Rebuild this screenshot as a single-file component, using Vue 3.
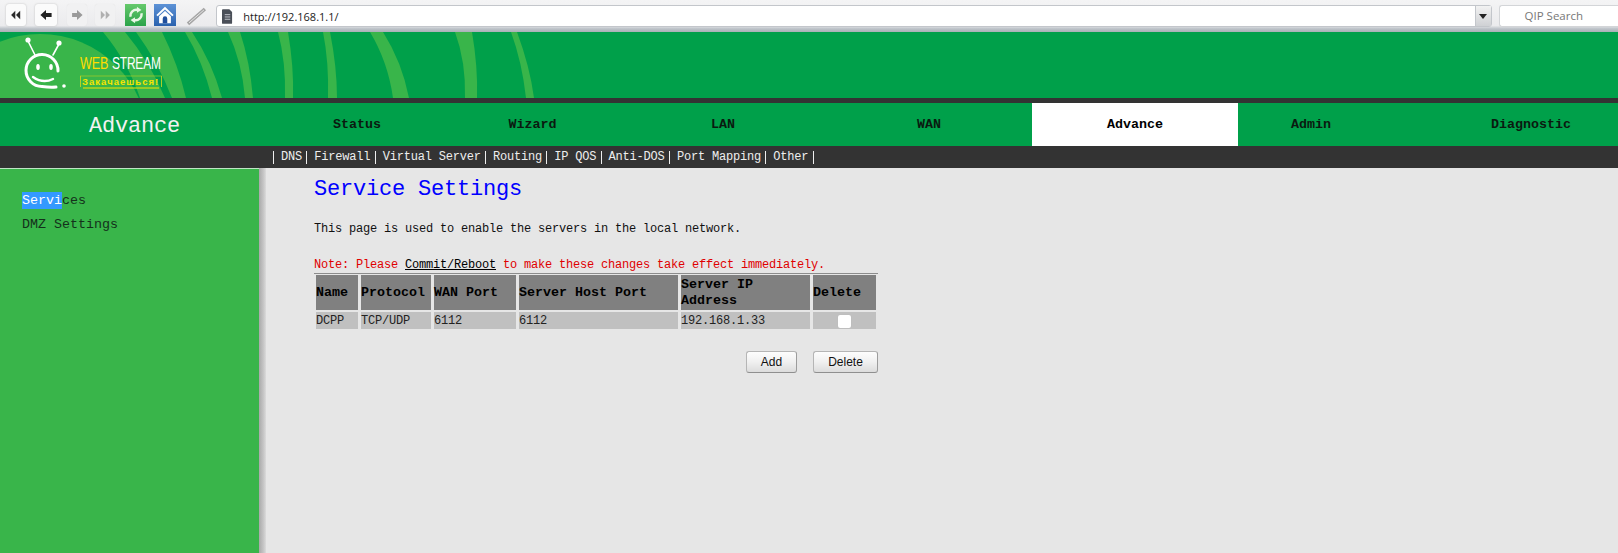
<template>
  <div class="page">
    <!-- browser toolbar -->
    <div class="toolbar">
      <div class="navbtn on">
        <svg viewBox="0 0 20 20"><path d="M9 4 3 10l6 6zM16 4l-6 6 6 6z" fill="#2b2b2b"/></svg>
      </div>
      <div class="navbtn on">
        <svg viewBox="0 0 20 20"><path d="M10 3 2 10l8 7v-4h8V7h-8z" fill="#222"/></svg>
      </div>
      <div class="navbtn off">
        <svg viewBox="0 0 20 20"><path d="M10 3l8 7-8 7v-4H3V7h7z" fill="#9a9a9a"/></svg>
      </div>
      <div class="navbtn off">
        <svg viewBox="0 0 20 20"><path d="M4 4l6 6-6 6zM11 4l6 6-6 6z" fill="#b0b0b0"/></svg>
      </div>
      <div class="tile refresh">
        <svg viewBox="0 0 22 22" fill="none" stroke="#e9f7e6" stroke-width="2.6">
          <path d="M5 13a6.500 6.500 0 0 1 8-7.500"/>
          <path d="M17 9a6.500 6.500 0 0 1-8 7.500"/>
          <path d="M12 2l5 3.500-5 3z" fill="#e9f7e6" stroke="none"/>
          <path d="M10 20l-5-3.500 5-3z" fill="#e9f7e6" stroke="none"/>
        </svg>
      </div>
      <div class="tile home">
        <svg viewBox="0 0 22 22">
          <path d="M11 2 1.500 11l1.500 1.500L11 5l8 7.500 1.500-1.500z" fill="#fff"/>
          <path d="M4.500 12.500 11 6.500l6.500 6V20h-13z" fill="#fff"/>
          <path d="M8.500 20v-5a2.500 2.500 0 0 1 5 0v5z" fill="#1f4f9c"/>
        </svg>
      </div>
      <div class="pencil">
        <svg viewBox="0 0 22 22" fill="none">
          <path d="M2 20 19 5" stroke="#a5a5a5" stroke-width="3.500"/>
          <path d="M3 19 18 6" stroke="#e4e4e4" stroke-width="1"/>
        </svg>
      </div>
      <div class="address">
        <svg class="page-icon" viewBox="0 0 12 16">
          <path d="M1 0h7l3 3v12a1 1 0 0 1-1 1H1a1 1 0 0 1-1-1V1a1 1 0 0 1 1-1z" fill="#4a4f58"/>
          <path d="M3 6h6M3 8.500h6M3 11h6" stroke="#c8ccd2" stroke-width="1"/>
        </svg>
        <span class="url">http://192.168.1.1/</span>
        <div class="drop"><i></i></div>
      </div>
      <div class="search">QIP Search</div>
    </div>

    <!-- banner with the logo -->
    <div class="banner">
      <svg class="art" viewBox="0 0 600 66" width="600" height="66">
        <circle cx="40" cy="110" r="108" fill="#39b54a"/>
        <g fill="#39b54a">
          <path d="M103 0h22Q150 30 165 66h-25Q128 30 103 0z"/>
          <path d="M136 0h26Q178 32 186 66h-14Q158 30 136 0z"/>
          <path d="M185 0h7Q212 30 222 66h-10Q203 30 185 0z"/>
          <path d="M228 0h12Q250 30 253 66h-8Q242 30 228 0z"/>
          <path d="M278 0h10Q294 35 293 66h-8Q286 30 278 0z"/>
          <path d="M323 0h7Q337 35 337 66h-9Q329 30 323 0z"/>
          <path d="M370 0h13Q402 30 409 66h-16Q388 30 370 0z"/>
          <path d="M455 0h17Q478 35 477 66h-12Q466 30 455 0z"/>
          <path d="M511 0h6Q530 35 534 66h-8Q522 30 511 0z"/>
        </g>
        <g fill="none" stroke="#fff" stroke-linecap="round">
          <path d="M58 39A16 16 0 1 0 42 54.500Q50 55.500 56 55" stroke-width="3"/>
          <path d="M33 45Q43 52 53 47" stroke-width="2.400"/>
          <path d="M35 23 28 9M53 23 59 12" stroke-width="1.600"/>
        </g>
        <g fill="#fff">
          <circle cx="28" cy="8" r="2.600"/>
          <circle cx="59" cy="11" r="2.600"/>
          <ellipse cx="38" cy="35" rx="1.800" ry="3"/>
          <ellipse cx="51" cy="35" rx="1.800" ry="3"/>
          <circle cx="64" cy="54" r="1.800"/>
        </g>
        <text class="brand" transform="translate(80 37) scale(0.97 1.3)" fill="#ffdd00">WEB</text>
        <text class="brand" transform="translate(112 37) scale(0.92 1.3)" fill="#fff">STREAM</text>
        <path d="M80.500 44v11M161.500 44v11" stroke="#d8d820" stroke-width="0.800"/>
        <path d="M80 44h82" stroke="#b8d020" stroke-width="0.600"/>
        <path d="M83 56h76" stroke="#f5e400" stroke-width="1.200"/>
        <text class="slogan" x="82" y="53" textLength="76">Закачаешься!</text>
      </svg>
    </div>
    <div class="rule"></div>

    <!-- main menu -->
    <div class="menu">
      <div class="section">Advance</div>
      <div v-for="tab in tabs" :key="tab.label" class="tab" :class="tab.cls">{{ tab.label }}</div>
    </div>

    <div class="submenu">
      <span v-for="item in subItems" :key="item" class="subitem">{{ item }}</span>
      <span class="subend"></span>
    </div>

    <div class="main">
      <aside class="sidebar">
        <div class="side-link"><span class="selected">Servi</span>ces</div>
        <div class="side-link">DMZ Settings</div>
      </aside>
      <div class="stripe"></div>
      <section class="content">
        <h1>Service Settings</h1>
        <p class="intro">This page is used to enable the servers in the local network.</p>
        <p class="note">Note: Please <a>Commit/Reboot</a> to make these changes take effect immediately.</p>
        <div class="line"></div>
        <table>
          <colgroup>
            <col v-for="w in colWidths" :key="w" :style="{ width: w + 'px' }">
          </colgroup>
          <thead>
            <tr>
              <th v-for="h in headers" :key="h">{{ h }}</th>
            </tr>
          </thead>
          <tbody>
            <tr>
              <td>DCPP</td>
              <td>TCP/UDP</td>
              <td>6112</td>
              <td>6112</td>
              <td>192.168.1.33</td>
              <td class="center"><input type="checkbox"></td>
            </tr>
          </tbody>
        </table>
        <div class="actions">
          <button class="add">Add</button>
          <button class="del">Delete</button>
        </div>
      </section>
    </div>
  </div>
</template>

<script setup>
const tabs = [
  { label: 'Status' },
  { label: 'Wizard' },
  { label: 'LAN' },
  { label: 'WAN' },
  { label: 'Advance', cls: 'active' },
  { label: 'Admin' },
  { label: 'Diagnostic', cls: 'last' }
]

const subItems = ['DNS', 'Firewall', 'Virtual Server', 'Routing', 'IP QOS', 'Anti-DOS', 'Port Mapping', 'Other']

// table columns, gaps come from border-spacing
const colWidths = [42, 70, 82, 159, 129, 63]
const headers = ['Name', 'Protocol', 'WAN Port', 'Server Host Port', 'Server IP Address', 'Delete']
</script>

<style>
html, body {
  margin: 0;
  background: #e6e6e6;
}
</style>

<style scoped>
.page {
  width: 1618px;
  height: 553px;
  overflow: hidden;
  font-family: "Liberation Mono", monospace;
  font-size: 12px;
  letter-spacing: -0.2px;
  color: #111;
  display: flex;
  flex-direction: column;
}

/* toolbar */
.toolbar {
  height: 32px;
  box-sizing: border-box;
  padding: 4px 0 0 6px;
  display: flex;
  align-items: flex-start;
  background: linear-gradient(#f4f4f5 0%, #ebebed 80%, #bcc2c8 90%, #a9b0b6 100%);
  letter-spacing: 0;
}

.navbtn {
  width: 20px;
  height: 22px;
  margin-right: 9px;
  border-radius: 3px;
  display: flex;
  align-items: center;
  justify-content: center;
}

.navbtn.on {
  background: #fbfbfb;
  box-shadow: 0 0 2px #bbb;
}

.navbtn.off {
  background: #f1f1f2;
  box-shadow: 0 0 1px #ddd;
}

.navbtn svg { width: 14px; height: 14px; }

.navbtn:nth-child(2) { width: 22px; }
.navbtn:nth-child(3) { margin-right: 8px; margin-left: 1px; }
.navbtn:nth-child(4) { margin-right: 10px; }

.tile {
  width: 22px;
  height: 22px;
  margin-right: 8px;
  display: flex;
  align-items: center;
  justify-content: center;
}

.tile svg { width: 20px; height: 20px; }

.refresh { background: linear-gradient(#66c96b, #2ba34a); }
.home { background: linear-gradient(#5d92d6, #2a62ae); }

.pencil {
  width: 22px;
  height: 22px;
  margin: 0 8px 0 2px;
}

.address {
  width: 1282px;
  height: 22px;
  box-sizing: border-box;
  margin-top: 1px;
  padding-left: 5px;
  display: flex;
  align-items: center;
  background: #fff;
  border: 1px solid #c3c6cb;
  border-radius: 3px;
}

.page-icon { width: 11px; height: 15px; }

.url {
  margin-left: 10px;
  font-family: "Open Sans", sans-serif;
  font-size: 11px;
  color: #222;
  flex: 1;
}

.drop {
  width: 15px;
  height: 100%;
  display: flex;
  align-items: center;
  justify-content: center;
  background: linear-gradient(#f2f2f2, #cfd1d4);
  border-left: 1px solid #c3c6cb;
}

.drop i {
  width: 0;
  height: 0;
  border: 4px solid transparent;
  border-top: 5px solid #222;
  margin-top: 4px;
}

.search {
  width: 120px;
  height: 22px;
  box-sizing: border-box;
  margin: 1px 0 0 7px;
  padding-left: 25px;
  background: #fff;
  border: 1px solid #d3d5d8;
  border-right: 0;
  border-radius: 3px 0 0 3px;
  font-family: "Open Sans", sans-serif;
  font-size: 11.500px;
  line-height: 20px;
  color: #777;
}

/* banner */
.banner {
  height: 66px;
  background: #00a04a;
  overflow: hidden;
}

.art { display: block; }

.brand {
  font-family: "Liberation Sans", sans-serif;
  font-size: 13px;
}

.slogan {
  font-family: "Liberation Sans", sans-serif;
  font-size: 9.500px;
  font-weight: 700;
  fill: #f5e400;
}

.rule {
  height: 5px;
  background: #333;
}

/* menu */
.menu {
  height: 43px;
  display: grid;
  grid-template-columns: 269px 176px 175px 206px 206px 206px 146px 234px;
  align-items: stretch;
  background: #00a04a;
  font-size: 13.333px;
  letter-spacing: 0;
  font-weight: 700;
  color: #0a1a10;
}

.section {
  font-size: 22px;
  font-weight: 400;
  letter-spacing: -0.200px;
  color: #f2f2f2;
  text-align: center;
  line-height: 47px;
}

.tab {
  line-height: 43px;
  text-align: center;
}

.tab.active {
  background: #fff;
  color: #000;
}

.tab.last { padding-left: 60px; }

.submenu {
  height: 22px;
  box-sizing: border-box;
  padding-left: 273px;
  display: flex;
  align-items: center;
  background: #333;
  color: #eee;
}

.subitem {
  border-left: 1px solid #eee;
  padding: 0 4.300px 0 7px;
  line-height: 13px;
}

.subend {
  width: 1px;
  height: 13px;
  background: #eee;
}

/* body */
.main {
  flex: 1;
  display: flex;
  min-height: 0;
}

.sidebar {
  width: 259px;
  box-sizing: border-box;
  padding: 23px 0 0 22px;
  background: #39b54a;
  border-top: 1px solid #bfe6c5;
  font-size: 13.333px;
  letter-spacing: 0;
  color: #14301b;
}

.side-link {
  height: 24px;
  line-height: 17px;
}

.selected {
  display: inline-block;
  background: #3399ff;
  color: #fff;
}

.stripe {
  width: 7px;
  background: linear-gradient(90deg, #a9a9a9, #c9c9c9 70%, #dcdcdc);
}

.content {
  flex: 1;
  padding: 9px 0 0 48px;
  background: #e6e6e6;
}

h1 {
  margin: 0 0 18px;
  font-size: 22px;
  font-weight: 400;
  line-height: 26px;
  color: #0000ff;
}

.intro {
  margin: 0 0 20px;
  line-height: 16px;
}

.note {
  margin: 0;
  line-height: 16px;
  color: #e00000;
}

.note a {
  color: #000;
  text-decoration: underline;
}

.line {
  width: 564px;
  height: 1px;
  background: #8c8c8c;
}

table {
  table-layout: fixed;
  width: 566px;
  margin: -1px 0 0 -1px;
  border-collapse: separate;
  border-spacing: 3px 2px;
}

th {
  height: 35px;
  padding: 0;
  box-sizing: border-box;
  background: #808080;
  color: #000;
  font-size: 13.333px;
  letter-spacing: 0;
  line-height: 16px;
  text-align: left;
  vertical-align: middle;
}

td {
  height: 17px;
  padding: 0;
  box-sizing: border-box;
  background: #c0c0c0;
  line-height: 16px;
  color: #222;
}

td.center {
  text-align: center;
}

input[type="checkbox"] {
  appearance: none;
  display: block;
  width: 13px;
  height: 13px;
  margin: 1px auto 0;
  background: #fff;
  border-radius: 2px;
  box-shadow: 0 0 1px #aaa;
}

.actions {
  width: 564px;
  margin-top: 20px;
  display: flex;
  justify-content: flex-end;
  gap: 16px;
}

button {
  height: 22px;
  padding: 0;
  font-family: "Liberation Sans", sans-serif;
  font-size: 12px;
  letter-spacing: 0;
  color: #111;
  background: linear-gradient(#fdfdfd, #f0f0f0 50%, #dcdcdc);
  border: 1px solid #b5b5b5;
  border-bottom-color: #8f8f8f;
  border-right-color: #9c9c9c;
  border-radius: 3px;
}

.add { width: 51px; }
.del { width: 65px; }
</style>
